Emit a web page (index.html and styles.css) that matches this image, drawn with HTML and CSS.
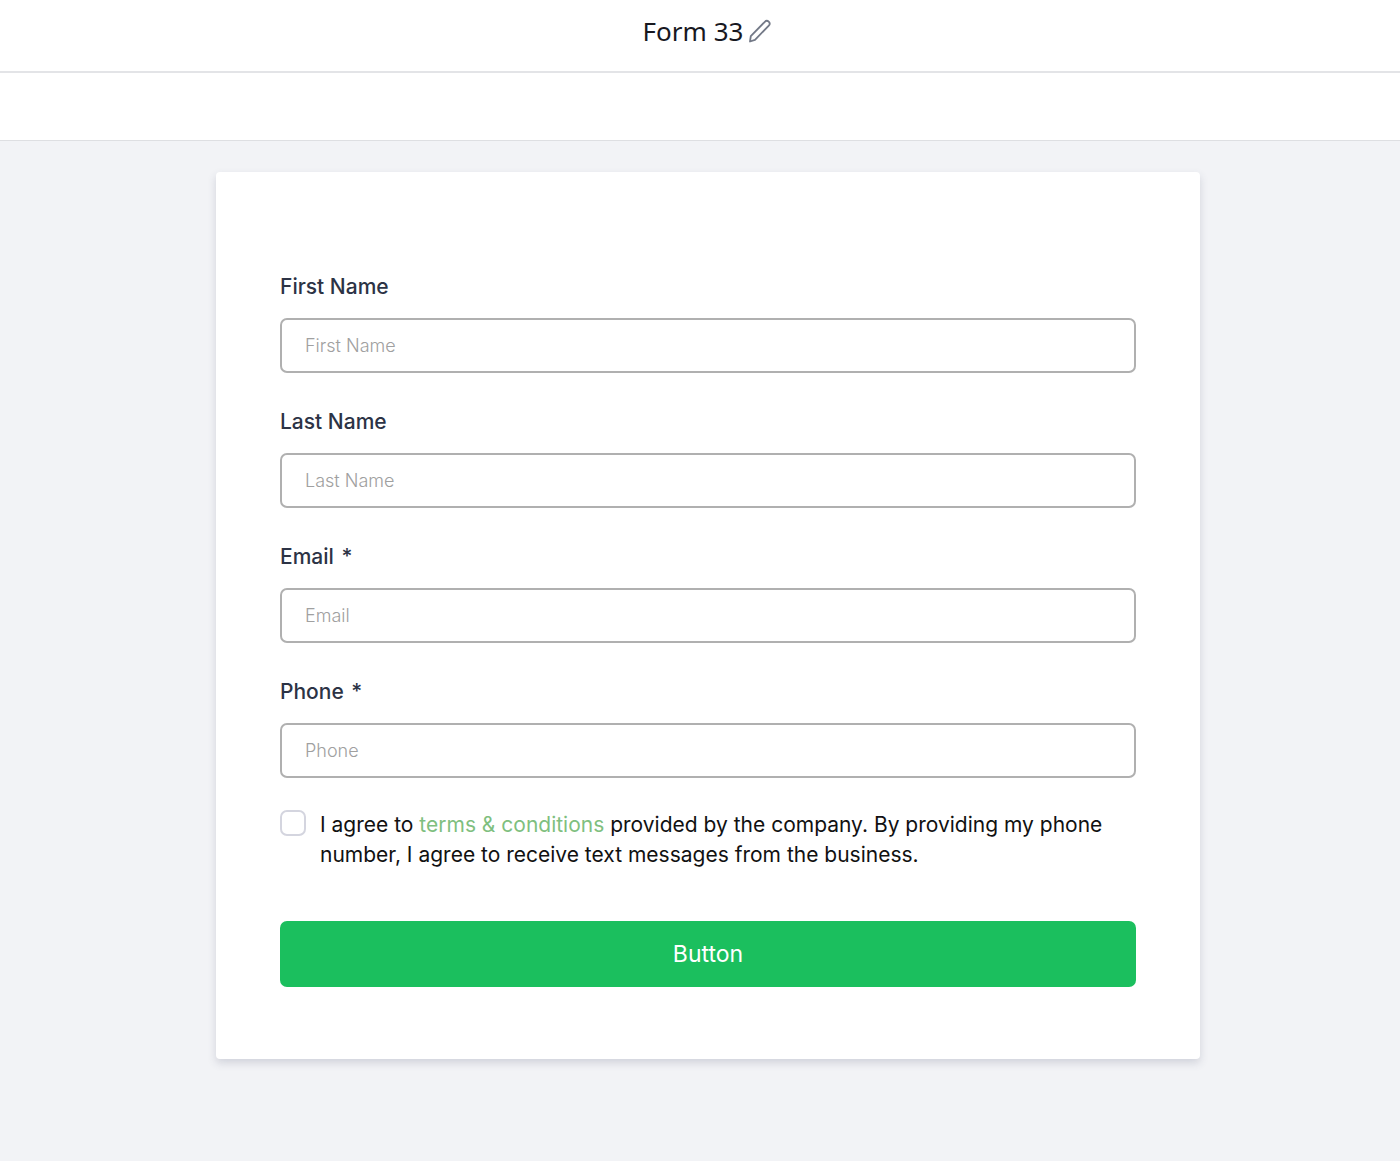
FILE: index.html
```
<!DOCTYPE html>
<html lang="en">
<head>
  <meta charset="utf-8">
  <meta name="viewport" content="width=device-width">
  <title>Form 33</title>
  <link rel="stylesheet" href="styles.css">
</head>
<body>
  <header class="header">
    <h1 class="title">Form 33</h1>
    <button class="edit" type="button" aria-label="Edit name">
      <svg width="22" height="24" viewBox="0 0 22 24" fill="none" stroke="#737987" stroke-width="1.8" stroke-linecap="round" stroke-linejoin="round">
        <path d="M1 22.500l.8-5.300L15.800 2.800a2.700 2.700 0 0 1 4 3.800L6 20.800z"/>
      </svg>
    </button>
  </header>
  <div class="toolbar"></div>
  <main class="canvas">
    <form class="card">
      <div class="field">
        <label for="first">First Name</label>
        <input id="first" type="text" placeholder="First Name">
      </div>
      <div class="field">
        <label for="last">Last Name</label>
        <input id="last" type="text" placeholder="Last Name">
      </div>
      <div class="field">
        <label for="email">Email <span class="star">*</span></label>
        <input id="email" type="email" placeholder="Email">
      </div>
      <div class="field">
        <label for="phone">Phone <span class="star">*</span></label>
        <input id="phone" type="tel" placeholder="Phone">
      </div>
      <div class="agree">
        <input id="agree" type="checkbox">
        <label for="agree">I agree to <a href="#">terms &amp; conditions</a> provided by the company. By providing my phone number, I agree to receive text messages from the business.</label>
      </div>
      <button class="submit" type="button">Button</button>
    </form>
  </main>
</body>
</html>
```
FILE: styles.css
```
* {
  box-sizing: border-box;
  margin: 0;
  padding: 0;
}
body {
  min-height: 100vh;
  background: #f2f3f6;
  font-family: Inter, "Liberation Sans", sans-serif;
}
.header {
  display: flex;
  align-items: center;
  justify-content: center;
  gap: 6px;
  height: 73px;
  padding: 0 0 10px 14px;
  background: #fff;
  border-bottom: 2px solid #e3e4e7;
}
.title {
  font-family: "Noto Sans", sans-serif;
  font-size: 26px;
  font-weight: 400;
  line-height: 36px;
  color: #18181f;
}
.edit {
  display: flex;
  border: 0;
  background: none;
  cursor: pointer;
}
.toolbar {
  height: 68px;
  background: #fff;
  border-bottom: 1px solid #dedfe2;
}
.canvas {
  padding: 31px 0 32px 16px;
}
.card {
  max-width: 984px;
  margin: 0 auto;
  padding: 102px 64px 72px;
  background: #fff;
  border-radius: 4px;
  box-shadow: 0 4px 8px rgba(60, 66, 100, 0.18);
}
.field {
  display: flex;
  flex-direction: column;
  gap: 18px;
  margin-bottom: 36px;
}
.field label {
  font-size: 21px;
  font-weight: 500;
  line-height: 26px;
  color: #2c3345;
}
.star {
  margin-left: 2px;
}
.field input {
  width: 100%;
  height: 55px;
  padding: 0 23px;
  border: 2px solid #b0b0b0;
  border-radius: 7px;
  font-family: inherit;
  font-size: 18px;
  font-weight: 300;
}
.field input::placeholder {
  color: #a0a0a0;
}
.agree {
  display: flex;
  align-items: flex-start;
  gap: 14px;
  margin: -4px 0 51px;
}
.agree input {
  flex: none;
  appearance: none;
  width: 26px;
  height: 26px;
  background: #fff;
  border: 2px solid #d4d5df;
  border-radius: 7px;
}
.agree input:checked {
  background: #1bbf5e;
}
.agree label {
  font-size: 21px;
  line-height: 30px;
  color: #111;
}
.agree a {
  color: #7fbf7f;
  text-decoration: none;
}
.submit {
  display: block;
  width: 100%;
  height: 66px;
  border: 0;
  border-radius: 7px;
  background: #1bbf5e;
  color: #fff;
  font-family: inherit;
  font-size: 23px;
  cursor: pointer;
}
```
